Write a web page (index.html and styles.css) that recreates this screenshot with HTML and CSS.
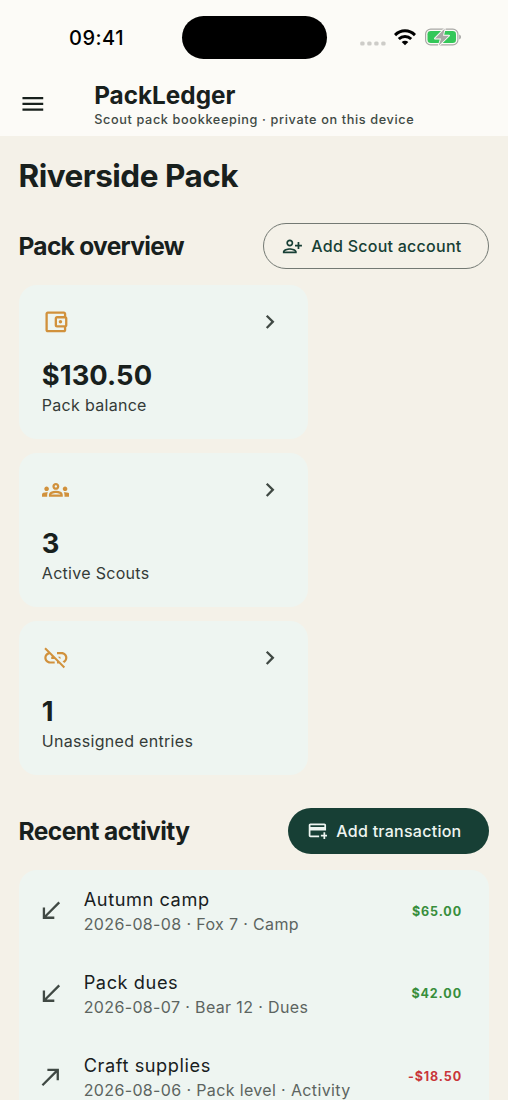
FILE: index.html
```html
<!DOCTYPE html>
<html lang="en">
<head>
<meta charset="utf-8">
<title>PackLedger</title>
<link rel="stylesheet" href="styles.css">
</head>
<body>
<div class="screen">
  <header class="topbar">
    <div class="status">
      <span class="clock">09:41</span>
      <span class="island"></span>
      <span class="indicators">
        <svg class="dots" viewBox="0 0 27 5"><rect x="0.2" y="0.4" width="4.4" height="4.2" rx="1.5"/><rect x="7.2" y="0.4" width="4.4" height="4.2" rx="1.5"/><rect x="14.2" y="0.4" width="4.4" height="4.2" rx="1.5"/><rect x="21.2" y="0.4" width="4.4" height="4.2" rx="1.5"/></svg>
        <svg class="wifi" viewBox="0 0 22 17"><g fill="none" stroke="#000" stroke-width="3"><path d="M1 6.1C6.7.4 15.3.4 21 6.1"/><path d="M4.8 10C8.4 6.5 13.6 6.5 17.2 10"/></g><path d="M11 16.2l-3.3-3.3c1.9-1.7 4.7-1.7 6.6 0z"/></svg>
        <svg class="battery" viewBox="0 0 36 18"><rect x="0.6" y="1.1" width="32.3" height="15.8" rx="5" fill="none" stroke="#a8a8a5" stroke-width="1.2"/><path d="M34.2 6.5c2.4.8 2.4 4.2 0 5z" fill="#a8a8a5"/><rect x="2.5" y="3" width="28.5" height="12" rx="3.3" fill="#34c759"/><path d="M19.8 0.5L10 10.5h6L13.8 17.6 24 7.7H18z" fill="#a8a8a5" stroke="#fcfbf7" stroke-width="1.8" stroke-linejoin="round" paint-order="stroke"/></svg>
      </span>
    </div>
    <div class="appbar">
      <svg class="icon menu" viewBox="0 0 24 24"><path d="M3 18h18v-2H3v2zm0-5h18v-2H3v2zm0-7v2h18V6H3z"/></svg>
      <div class="brand">
        <div class="brand-name">PackLedger</div>
        <div class="brand-sub">Scout pack bookkeeping · private on this device</div>
      </div>
    </div>
  </header>
  <main class="content">
    <h1 class="page-title">Riverside Pack</h1>
    <div class="section-head">
      <h2 class="section-title overview">Pack overview</h2>
      <div class="button outlined">
        <svg class="icon small" viewBox="0 0 24 24"><path d="M13 8c0-2.21-1.79-4-4-4S5 5.79 5 8s1.79 4 4 4 4-1.79 4-4zm-2 0c0 1.1-.9 2-2 2s-2-.9-2-2 .9-2 2-2 2 .9 2 2zM1 18v2h16v-2c0-2.66-5.33-4-8-4s-8 1.34-8 4zm2 0c.2-.71 3.3-2 6-2 2.69 0 5.77 1.28 6 2H3zM20 15v-3h3v-2h-3V7h-2v3h-3v2h3v3h2z"/></svg>
        <span>Add Scout account</span>
      </div>
    </div>
    <div class="metrics">
      <div class="metric">
        <div class="metric-top">
          <svg class="icon accent" viewBox="0 0 24 24"><path d="M21 7.28V5c0-1.1-.9-2-2-2H5c-1.11 0-2 .9-2 2v14c0 1.1.89 2 2 2h14c1.1 0 2-.9 2-2v-2.28c.59-.35 1-.98 1-1.72V9c0-.74-.41-1.37-1-1.72zM20 9v6h-7V9h7zM5 19V5h14v2h-6c-1.1 0-2 .9-2 2v6c0 1.1.9 2 2 2h6v2H5z"/><circle cx="16" cy="12" r="1.5"/></svg>
          <svg class="icon chevron" viewBox="0 0 24 24"><path d="M10 6L8.59 7.41 13.17 12l-4.58 4.59L10 18l6-6z"/></svg>
        </div>
        <div class="value">$130.50</div>
        <div class="label">Pack balance</div>
      </div>
      <div class="metric">
        <div class="metric-top">
          <svg class="icon accent" viewBox="0 0 24 24"><path d="M4 13c1.1 0 2-.9 2-2s-.9-2-2-2-2 .9-2 2 .9 2 2 2zm1.13 1.1C4.76 14.04 4.39 14 4 14c-.99 0-1.93.21-2.78.58C.48 14.9 0 15.62 0 16.43V18h4.5v-1.61c0-.83.23-1.61.63-2.29zM20 13c1.1 0 2-.9 2-2s-.9-2-2-2-2 .9-2 2 .9 2 2 2zm4 3.43c0-.81-.48-1.53-1.22-1.85C21.93 14.21 20.99 14 20 14c-.39 0-.76.04-1.13.1.4.68.63 1.46.63 2.29V18H24v-1.57zM16.24 13.65c-1.17-.52-2.61-.9-4.24-.9s-3.07.39-4.24.9C6.68 14.13 6 15.21 6 16.39V18h12v-1.61c0-1.18-.68-2.26-1.76-2.74zM8.07 16c.09-.23.13-.39.91-.69.97-.38 1.99-.56 3.02-.56s2.05.18 3.02.56c.77.3.81.46.91.69H8.07zM12 8c.55 0 1 .45 1 1s-.45 1-1 1-1-.45-1-1 .45-1 1-1m0-2c-1.66 0-3 1.34-3 3s1.34 3 3 3 3-1.34 3-3-1.34-3-3-3z"/></svg>
          <svg class="icon chevron" viewBox="0 0 24 24"><path d="M10 6L8.59 7.41 13.17 12l-4.58 4.59L10 18l6-6z"/></svg>
        </div>
        <div class="value">3</div>
        <div class="label">Active Scouts</div>
      </div>
      <div class="metric">
        <div class="metric-top">
          <svg class="icon accent" viewBox="0 0 24 24"><path d="M17 7h-4v1.9h4c1.71 0 3.1 1.39 3.1 3.1 0 1.43-.98 2.63-2.31 2.98l1.46 1.46C20.88 15.61 22 13.95 22 12c0-2.76-2.24-5-5-5zm-1 4h-2.19l2 2H16zM2 4.27l3.11 3.11C3.29 8.12 2 9.91 2 12c0 2.76 2.24 5 5 5h4v-1.9H7c-1.71 0-3.1-1.39-3.1-3.1 0-1.59 1.21-2.9 2.76-3.07L8.73 11H8v2h2.73L13 15.27V17h1.73l4.01 4L20 19.74 3.27 3 2 4.27z"/></svg>
          <svg class="icon chevron" viewBox="0 0 24 24"><path d="M10 6L8.59 7.41 13.17 12l-4.58 4.59L10 18l6-6z"/></svg>
        </div>
        <div class="value">1</div>
        <div class="label">Unassigned entries</div>
      </div>
    </div>
    <div class="section-head activity-head">
      <h2 class="section-title">Recent activity</h2>
      <div class="button filled">
        <svg class="icon small" viewBox="0 0 24 24"><path d="M20 4H4c-1.11 0-1.99.89-1.99 2L2 18c0 1.11.89 2 2 2h10v-2H4v-6h18V6c0-1.11-.89-2-2-2zm0 4H4V6h16v2zm4 9v2h-3v3h-2v-3h-3v-2h3v-3h2v3h3z"/></svg>
        <span>Add transaction</span>
      </div>
    </div>
    <div class="list">
      <div class="entry">
        <svg class="icon muted" viewBox="0 0 24 24"><path d="M15 19v-2H8.41L20 5.41 18.59 4 7 15.59V9H5v10h10z"/></svg>
        <div class="entry-text">
          <div class="entry-title">Autumn camp</div>
          <div class="entry-sub">2026-08-08 · Fox 7 · Camp</div>
        </div>
        <div class="amount income">$65.00</div>
      </div>
      <div class="entry">
        <svg class="icon muted" viewBox="0 0 24 24"><path d="M15 19v-2H8.41L20 5.41 18.59 4 7 15.59V9H5v10h10z"/></svg>
        <div class="entry-text">
          <div class="entry-title">Pack dues</div>
          <div class="entry-sub">2026-08-07 · Bear 12 · Dues</div>
        </div>
        <div class="amount income">$42.00</div>
      </div>
      <div class="entry">
        <svg class="icon muted" viewBox="0 0 24 24"><path d="M9 5v2h6.59L4 18.59 5.41 20 17 8.41V15h2V5H9z"/></svg>
        <div class="entry-text">
          <div class="entry-title">Craft supplies</div>
          <div class="entry-sub">2026-08-06 · Pack level · Activity</div>
        </div>
        <div class="amount expense">-$18.50</div>
      </div>
    </div>
  </main>
</div>
</body>
</html>
```
FILE: styles.css
```css
* { box-sizing: border-box; }

body {
  margin: 0;
  background: #f4f1e8;
  color: #18201d;
  font-family: Inter, "Liberation Sans", sans-serif;
  font-optical-sizing: none;
}

.screen {
  width: 508px;
  height: 1100px;
  overflow: hidden;
}

.topbar {
  height: 136px;
  background: #fcfbf7;
}

.status {
  display: grid;
  grid-template-columns: 181.5px 145px 1fr;
  padding-top: 16px;
  height: 72px;
}

.clock {
  padding-left: 69px;
  color: #000;
  font-size: 20px;
  font-weight: 550;
  line-height: 44px;
  letter-spacing: 0.5px;
}

.island {
  height: 42.5px;
  border-radius: 22px;
  background: #000;
}

.indicators {
  display: flex;
  padding-left: 33.5px;
  height: 43px;
}

.dots { width: 27px; height: 5px; margin-top: 24.5px; fill: #cdccc8; }
.wifi { width: 22px; height: 17px; margin: 12.5px 0 0 7px; }
.battery { width: 36px; height: 18px; margin: 12px 0 0 9px; }

.appbar {
  display: flex;
  padding: 9px 18px 0 18.5px;
}

.icon {
  flex: none;
  display: block;
  width: 27.7px;
  height: 27.7px;
  fill: currentColor;
}

.icon.small { width: 20.8px; height: 20.8px; }
.menu { margin: 9px 0 0; }

.brand { margin-left: 48px; }

.brand-name {
  font-size: 24.3px;
  font-weight: 700;
  line-height: 28px;
  letter-spacing: 0;
}

.brand-sub {
  margin-top: 3px;
  font-size: 12.7px;
  font-weight: 500;
  line-height: 16px;
  letter-spacing: 0.63px;
  color: #404944;
}

.content { padding: 0 19px 0 18.5px; }

.page-title {
  margin: 0;
  padding-top: 19px;
  font-size: 31.5px;
  font-weight: 700;
  line-height: 42px;
  letter-spacing: -0.5px;
}

.section-head {
  display: flex;
  justify-content: space-between;
  align-items: center;
  height: 46px;
  margin-top: 26px;
}

.activity-head { margin-top: 32.5px; }

.section-title {
  margin: 0;
  font-size: 24.5px;
  font-weight: 650;
  line-height: 32px;
  letter-spacing: -0.55px;
}

.overview { letter-spacing: -0.7px; }

.button {
  display: flex;
  align-items: center;
  gap: 9px;
  height: 46px;
  padding: 0 27.5px 0 18.5px;
  border-radius: 23px;
  font-size: 16px;
  font-weight: 500;
  letter-spacing: 0.26px;
}

.outlined {
  padding: 0 26.5px 0 17.5px;
  border: 1.2px solid #737973;
  color: #173f35;
}

.filled { background: #173f35; color: #eef5f1; }

.metrics {
  display: flex;
  flex-direction: column;
  gap: 13.8px;
  margin-top: 16px;
}

.metric {
  width: 289.5px;
  height: 154.2px;
  padding: 23px 24px 23px 23.3px;
  border-radius: 18px;
  background: #eef5f1;
}

.metric-top { display: flex; justify-content: space-between; }
.accent { color: #d1913c; }
.chevron { color: #404944; }

.value {
  margin-top: 23px;
  font-size: 27.3px;
  font-weight: 700;
  line-height: 34px;
  letter-spacing: 0.1px;
}

.label {
  margin-top: 1px;
  font-size: 16px;
  line-height: 23px;
  letter-spacing: 0.3px;
  color: #343b38;
}

.list {
  margin-top: 16px;
  height: 260px;
  border-radius: 18px;
  background: #eef5f1;
}

.entry {
  display: flex;
  align-items: center;
  height: 82.7px;
  padding: 0 27px 0 18.5px;
}

.muted { color: #404944; }
.entry-text { flex: 1; margin: 0.5px 0 0 19px; }

.entry-title {
  font-size: 18.2px;
  line-height: 26px;
  letter-spacing: 0.57px;
  color: #18201d;
}

.entry-sub {
  font-size: 16px;
  line-height: 24px;
  letter-spacing: 0.36px;
  color: #5c6460;
}

.amount {
  font-size: 12.5px;
  font-weight: 650;
  letter-spacing: 0.9px;
}

.income { color: #388e3c; }
.expense { color: #c9353a; }
```
